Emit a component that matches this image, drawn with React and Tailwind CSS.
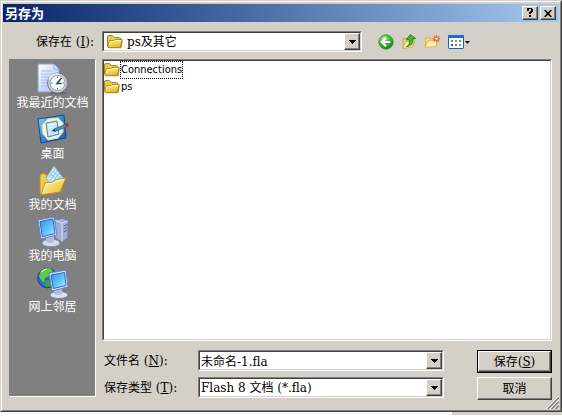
import React from 'react';

const FONT = "font-['DejaVu_Serif','Noto_Sans_CJK_SC',serif]";
const SUNKEN =
  'border border-t-[#808080] border-l-[#808080] border-r-white border-b-white';
const SUNKEN_INNER =
  'border border-t-[#404040] border-l-[#404040] border-r-[#d4d0c8] border-b-[#d4d0c8]';
const RAISED =
  'border border-t-white border-l-white border-r-[#404040] border-b-[#404040] bg-[#d4d0c8] shadow-[inset_-1px_-1px_0_#808080]';

function Folder() {
  return (
    <svg width="16" height="16" viewBox="0 0 16 16" className="shrink-0" aria-hidden="true">
      <defs>
        <linearGradient id="folderFace" x1="0" y1="0" x2="0.4" y2="1">
          <stop offset="0" stopColor="#fff29a" />
          <stop offset="1" stopColor="#e6bd30" />
        </linearGradient>
      </defs>
      <path d="M.5 12.5V3Q.5 1.5 2 1.5H5.5L7.5 3.5H12.5Q13.7 3.5 13.7 5V12.5Z" fill="#e9ca4c" stroke="#ad8820" />
      <path d="M1.2 13.8 3.4 6.8H15.8L14.4 14.3H2Z" fill="#7d6010" opacity=".7" />
      <path d="M.7 12.5 2.5 6.5H7L8 5.5H15.2L13.7 12.3Q13.4 13.5 12.3 13.5H2Q.7 13.5 .7 12.5Z" fill="url(#folderFace)" stroke="#b38a1e" />
      <path d="M2.3 11 3.4 7.5H7.5L8.5 6.5H14" fill="none" stroke="#fffbd0" />
    </svg>
  );
}

function BackIcon() {
  return (
    <svg width="16" height="16" viewBox="0 0 16 16" aria-hidden="true">
      <defs>
        <radialGradient id="backBall" cx=".35" cy=".25" r=".8">
          <stop offset="0" stopColor="#a5ea8c" />
          <stop offset=".5" stopColor="#44b83c" />
          <stop offset="1" stopColor="#158018" />
        </radialGradient>
      </defs>
      <circle cx="8" cy="8" r="7.2" fill="url(#backBall)" stroke="#299028" strokeWidth=".8" />
      <path d="M8 3.8 3.8 8 8 12.2M4.5 8H12.3" fill="none" stroke="#fff" strokeWidth="2.2" />
    </svg>
  );
}

function UpIcon() {
  return (
    <svg width="16" height="16" viewBox="0 0 16 16" aria-hidden="true">
      <path d="M2 14V5L5 4 6 5 12 3.5V12Z" fill="#f0d667" stroke="#c3a03a" strokeWidth=".8" />
      <path d="M2 14.5 4 8 13.5 6 11.5 13Z" fill="#fff0a0" stroke="#c6a440" strokeWidth=".8" />
      <path d="M5.5 12.5Q9.2 11.5 8.2 5.5L5 6 9.3.6 14.6 4.5 11.8 5Q12.6 12 5.5 12.5Z" fill="#42b832" stroke="#187518" strokeWidth=".8" />
    </svg>
  );
}

function NewFolderIcon() {
  return (
    <svg width="17" height="16" viewBox="0 0 17 16" aria-hidden="true">
      <path d="M1.5 13V4L5 3.5 6 5H12V12Z" fill="#f5d97c" stroke="#d5aa50" strokeWidth=".8" />
      <path d="M1.5 13.5 3.5 7 13.5 6 12 12.5Z" fill="#fff0aa" stroke="#d8b15b" strokeWidth=".8" />
      <path d="M12.5 1V8.6M8.8 4.8H16.2M9.8 2.2 15.2 7.4M15.2 2.2 9.8 7.4" stroke="#f15a32" strokeWidth="1.2" />
      <circle cx="12.5" cy="4.8" r="1.6" fill="#ffe2a5" stroke="#f36c35" strokeWidth=".6" />
    </svg>
  );
}

function ViewsIcon() {
  return (
    <svg width="23" height="16" viewBox="0 0 23 16" aria-hidden="true">
      <rect x=".5" y="1.5" width="15" height="13" rx=".5" fill="#fff" stroke="#1666c8" />
      <path d="M0 1H16V4H0Z" fill="#1c70d4" />
      <path d="M3 6H5V8H3ZM11 6H13V8H11Z" fill="#6488b8" />
      <path d="M7 6H9V8H7ZM11 10H13V12H11Z" fill="#69ad83" />
      <path d="M3 10H5V12H3Z" fill="#315dba" />
      <path d="M7 10H9V12H7Z" fill="#dc6540" />
      <path d="M17 7H22L19.5 9.8Z" fill="#000" />
    </svg>
  );
}

function RecentIcon() {
  return (
    <svg width="32" height="32" viewBox="0 0 32 32" aria-hidden="true">
      <defs>
        <linearGradient id="page" x1="0" y1="0" x2="1" y2="1">
          <stop offset="0" stopColor="#fff" />
          <stop offset="1" stopColor="#9ebcf2" />
        </linearGradient>
      </defs>
      <path d="M1 1H17L22 6V29H1Z" fill="url(#page)" stroke="#80a2e2" />
      <path d="M17 1V6H22Z" fill="#dceaff" stroke="#7899dc" strokeWidth=".7" />
      <path d="M4 8H15M4 11H18M4 14H12M4 17H10M4 20H10M4 23H11" stroke="#a4bdea" />
      <ellipse cx="21" cy="30" rx="9" ry="1.5" fill="#444" opacity=".45" />
      <circle cx="20.5" cy="20" r="10" fill="#c6ccd4" stroke="#77818e" />
      <circle cx="20.5" cy="20" r="7.5" fill="#f6fbff" stroke="#9aa5b2" />
      <path d="M20.5 13.5V15M20.5 25V26.5M14 20H15.5M25.5 20H27" stroke="#55708e" />
      <path d="M24.5 15 20 20.5H24.5" fill="none" stroke="#33475c" strokeWidth="1.5" />
      <path d="M12 16.5Q14.5 10 21.5 11" fill="none" stroke="#fff" strokeWidth="1.3" />
    </svg>
  );
}

function DesktopIcon() {
  return (
    <svg width="32" height="32" viewBox="0 0 32 32" aria-hidden="true">
      <defs>
        <linearGradient id="desk" x1="0" y1="0" x2="1" y2="1">
          <stop offset="0" stopColor="#8ed6ff" />
          <stop offset=".5" stopColor="#2f8ae0" />
          <stop offset="1" stopColor="#1458b5" />
        </linearGradient>
      </defs>
      <path d="M1 5 27 1 29 24 4 29Z" fill="url(#desk)" stroke="#104a94" />
      <path d="M5 11 11 5 21 4 26 9 26 18 21 24 11 26 6 20Z" fill="#fff4c6" stroke="#e7dda8" />
      <path d="M9 9 20 7 22 20 11 23Z" fill="#c6e8ff" stroke="#3c87ce" />
      <path d="M11 11 18 10M11.5 14 16 13" stroke="#fff" />
      <path d="M17 15 28 10.5 29.5 13 18 17.5Z" fill="#4c92d8" stroke="#24558f" strokeWidth=".7" />
      <circle cx="30" cy="11" r="1.9" fill="#b92d2c" />
      <path d="M14.5 17 17.5 15 18.2 17.4Z" fill="#222" />
    </svg>
  );
}

function DocumentsIcon() {
  return (
    <svg width="32" height="32" viewBox="0 0 32 32" aria-hidden="true">
      <defs>
        <linearGradient id="docFolder" x1="0" y1="0" x2="1" y2="1">
          <stop offset="0" stopColor="#fffaa6" />
          <stop offset="1" stopColor="#eab52c" />
        </linearGradient>
      </defs>
      <path d="M3 29V10L6 8 10 10V14L22 12 25 26Z" fill="#f0cc4a" stroke="#b38b22" />
      <path d="M9 13 17 1 27 14 17 25Z" fill="#cce8fb" stroke="#78b2dc" />
      <path d="M18 4 12 12M20 6 13 16M22 8 15 18M24 11 17 20M14 9 22 17M16 6 24 14" stroke="#86bde8" strokeWidth=".8" />
      <path d="M4 30 8 18 16 17 18 15 29 13 23 27Z" fill="url(#docFolder)" stroke="#bd8f24" />
      <path d="M6 28 9 19 17 18 19 16 27 14.5" fill="none" stroke="#fffbd0" />
    </svg>
  );
}

function ScreenDefs() {
  return (
    <defs>
      <linearGradient id="screen" x1="0" y1="0" x2="1" y2="1">
        <stop offset="0" stopColor="#2d8df0" />
        <stop offset=".6" stopColor="#68c9ff" />
        <stop offset="1" stopColor="#b8f0ff" />
      </linearGradient>
    </defs>
  );
}

function ComputerIcon() {
  return (
    <svg width="32" height="32" viewBox="0 0 32 32" aria-hidden="true">
      <ScreenDefs />
      <path d="M18 4 26 2 31 5V22L25 26 18 22Z" fill="#a2acd6" stroke="#6874a6" />
      <path d="M18 4 25 7 31 5M25 7V26" fill="none" stroke="#dce2f8" />
      <path d="M26.5 10 30 8.5M26.5 13 30 11.5M26.5 16 30 14.5" stroke="#56669b" />
      <ellipse cx="14" cy="27" rx="9" ry="3.8" fill="#d9deef" stroke="#7b86ac" />
      <path d="M9 20H17V26Q13 28 9 26Z" fill="#b4bdd8" />
      <path d="M1 4 17 1 20 19 4 23Z" fill="#dce4fb" stroke="#6a7fb7" />
      <path d="M3 5.7 15.8 3 18 17.5 5.3 20.7Z" fill="url(#screen)" stroke="#276ac0" />
    </svg>
  );
}

function NetworkIcon() {
  return (
    <svg width="32" height="32" viewBox="0 0 32 32" aria-hidden="true">
      <ScreenDefs />
      <circle cx="10.5" cy="11" r="9.8" fill="#2468d2" stroke="#173e94" />
      <path d="M3 6Q7 1 13 1L16 4 12 6 13 9 8 11 7 16 4 13 2 9Z" fill="#5ecb43" />
      <path d="M9 13 15 14 14 19 10 20 7 18Z" fill="#38a937" />
      <path d="M4 5Q7 2 10 2" fill="none" stroke="#b7f59a" strokeWidth="1.3" />
      <ellipse cx="22" cy="28" rx="9" ry="3.5" fill="#dce1ef" stroke="#7b86ac" />
      <path d="M17 21H25V27Q21 29 17 27Z" fill="#b4bdd8" />
      <path d="M12 6 29 3 31 20 15 24Z" fill="#dce4fb" stroke="#6a7fb7" />
      <path d="M14 8 27.5 5.5 29 18.5 16.3 21.5Z" fill="url(#screen)" stroke="#276ac0" />
    </svg>
  );
}

function Arrow() {
  return (
    <svg width="7" height="4" viewBox="0 0 7 4" shapeRendering="crispEdges" aria-hidden="true">
      <path d="M0 0H7V1H6V2H5V3H4V4H3V3H2V2H1V1H0Z" fill="#000" />
    </svg>
  );
}

function Combo({ children }) {
  return (
    <div className={`min-w-0 flex-1 ${SUNKEN}`}>
      <div className={`flex h-[19px] items-center bg-white ${SUNKEN_INNER}`}>{children}</div>
    </div>
  );
}

const ARROW_BOX = `flex h-[17px] w-4 shrink-0 items-center justify-center ${RAISED}`;

function SelectBox({ id, value, icon }) {
  return (
    <Combo>
      {icon && <span className="pointer-events-none pl-[3px]">{icon}</span>}
      <select id={id} className={`h-[17px] min-w-0 flex-1 appearance-none bg-transparent outline-none ${icon ? 'pl-1' : 'pl-px'}`}>
        <option>{value}</option>
      </select>
      <span className={`pointer-events-none ${ARROW_BOX}`}>
        <Arrow />
      </span>
    </Combo>
  );
}

const places = [
  ['我最近的文档', RecentIcon],
  ['桌面', DesktopIcon],
  ['我的文档', DocumentsIcon],
  ['我的电脑', ComputerIcon],
  ['网上邻居', NetworkIcon],
];

const tools = [
  ['后退', BackIcon],
  ['向上一级', UpIcon],
  ['新建文件夹', NewFolderIcon],
  ['查看', ViewsIcon],
];

export default function App() {
  return (
    <div className={`min-h-screen bg-white text-[12px] leading-4 text-black ${FONT}`}>
      <main className="relative border border-t-[#d4d0c8] border-r-[#404040] border-b-[#404040] border-l-[#d4d0c8] bg-[#d4d0c8]">
        <div className="border border-t-white border-r-[#808080] border-b-[#808080] border-l-white px-px pt-0.5 pb-2.5">
          <header className="flex h-[18px] items-center bg-linear-to-r from-[#0a246a] to-[#a6caf0] pr-[3px] pl-0.5">
            <h1 className="flex-1 font-['Noto_Sans_CJK_SC',sans-serif] text-[13px] leading-4 font-bold text-white">另存为</h1>
            <div className="flex gap-0.5">
              <button aria-label="帮助" className={`flex h-3.5 w-4 items-center justify-center ${RAISED}`}>
                <svg width="8" height="10" viewBox="0 0 8 10" shapeRendering="crispEdges" aria-hidden="true">
                  <path d="M1 0H6V1H7V4H6V5H5V6H3V4H4V3H5V1H3V3H1ZM3 7H5V9H3Z" />
                </svg>
              </button>
              <button aria-label="关闭" className={`flex h-3.5 w-4 items-center justify-center ${RAISED}`}>
                <svg width="8" height="7" viewBox="0 0 8 7" aria-hidden="true">
                  <path d="M.7 0 7.3 7M7.3 0 .7 7" stroke="#000" strokeWidth="1.6" />
                </svg>
              </button>
            </div>
          </header>

          <div className="px-1.5 pt-[9px]">
            <div className="flex items-center">
              <label htmlFor="folder" className="w-[93px] shrink-0 pr-2 text-right">
                保存在 (<u>I</u>):
              </label>
              <div className="flex w-[260px] shrink-0">
                <SelectBox id="folder" value="ps及其它" icon={<Folder />} />
              </div>
              <div className="ml-4 flex gap-[7px]">
                {tools.map(([name, Icon]) => (
                  <button key={name} aria-label={name}>
                    <Icon />
                  </button>
                ))}
              </div>
            </div>

            <div className="mt-[7px] flex gap-1.5">
              <nav className={`mb-[3px] w-[87px] shrink-0 bg-[#808080] pt-[3px] ${SUNKEN}`}>
                {places.map(([name, Icon]) => (
                  <button key={name} className="flex h-[51px] w-full flex-col items-center text-white">
                    <Icon />
                    <span className="leading-4 whitespace-nowrap">{name}</span>
                  </button>
                ))}
              </nav>

              <div className="min-w-0 flex-1 pr-px">
                <div className={SUNKEN}>
                  <ul className={`h-[280px] bg-white font-['DejaVu_Sans_Condensed','Noto_Sans_CJK_SC',sans-serif] text-[11px] ${SUNKEN_INNER}`}>
                    {['Connections', 'ps'].map((name, i) => (
                      <li key={name} className="flex h-[17px] items-center">
                        <button className="flex items-center">
                          <Folder />
                          <span className={i === 0 ? 'border border-dotted border-black' : 'border border-transparent'}>{name}</span>
                        </button>
                      </li>
                    ))}
                  </ul>
                </div>

                <form className="mt-[9px] flex gap-[33px] pl-0.5" onSubmit={(e) => e.preventDefault()}>
                  <div className="flex min-w-0 flex-1 flex-col gap-1.5">
                    <div className="flex items-center">
                      <label htmlFor="filename" className="w-[94px] shrink-0">
                        文件名 (<u>N</u>):
                      </label>
                      <Combo>
                        <input id="filename" defaultValue="未命名-1.fla" className="h-[17px] min-w-0 flex-1 pl-px outline-none" />
                        <button type="button" aria-label="历史文件名" className={ARROW_BOX}>
                          <Arrow />
                        </button>
                      </Combo>
                    </div>
                    <div className="flex items-center">
                      <label htmlFor="filetype" className="w-[94px] shrink-0">
                        保存类型 (<u>T</u>):
                      </label>
                      <SelectBox id="filetype" value="Flash 8 文档 (*.fla)" />
                    </div>
                  </div>
                  <div className="flex w-[75px] shrink-0 flex-col gap-1">
                    <div className="border border-black">
                      <button type="submit" className={`block h-[21px] w-full ${RAISED}`}>
                        保存(<u>S</u>)
                      </button>
                    </div>
                    <button type="button" className={`h-[23px] ${RAISED}`}>取消</button>
                  </div>
                </form>
              </div>
            </div>
          </div>
        </div>
        <svg className="absolute right-0.5 bottom-0.5" width="13" height="13" viewBox="0 0 13 13" aria-hidden="true">
          <path d="M0 13 13 0M4 13 13 4M8 13 13 8" stroke="#fff" />
          <path d="M1.5 13 13 1.5M5.5 13 13 5.5M9.5 13 13 9.5" stroke="#808080" strokeWidth="1.5" />
        </svg>
      </main>
      <div className="ml-auto h-[3px] w-[110px] bg-[#d4d0c8]" />
    </div>
  );
}
